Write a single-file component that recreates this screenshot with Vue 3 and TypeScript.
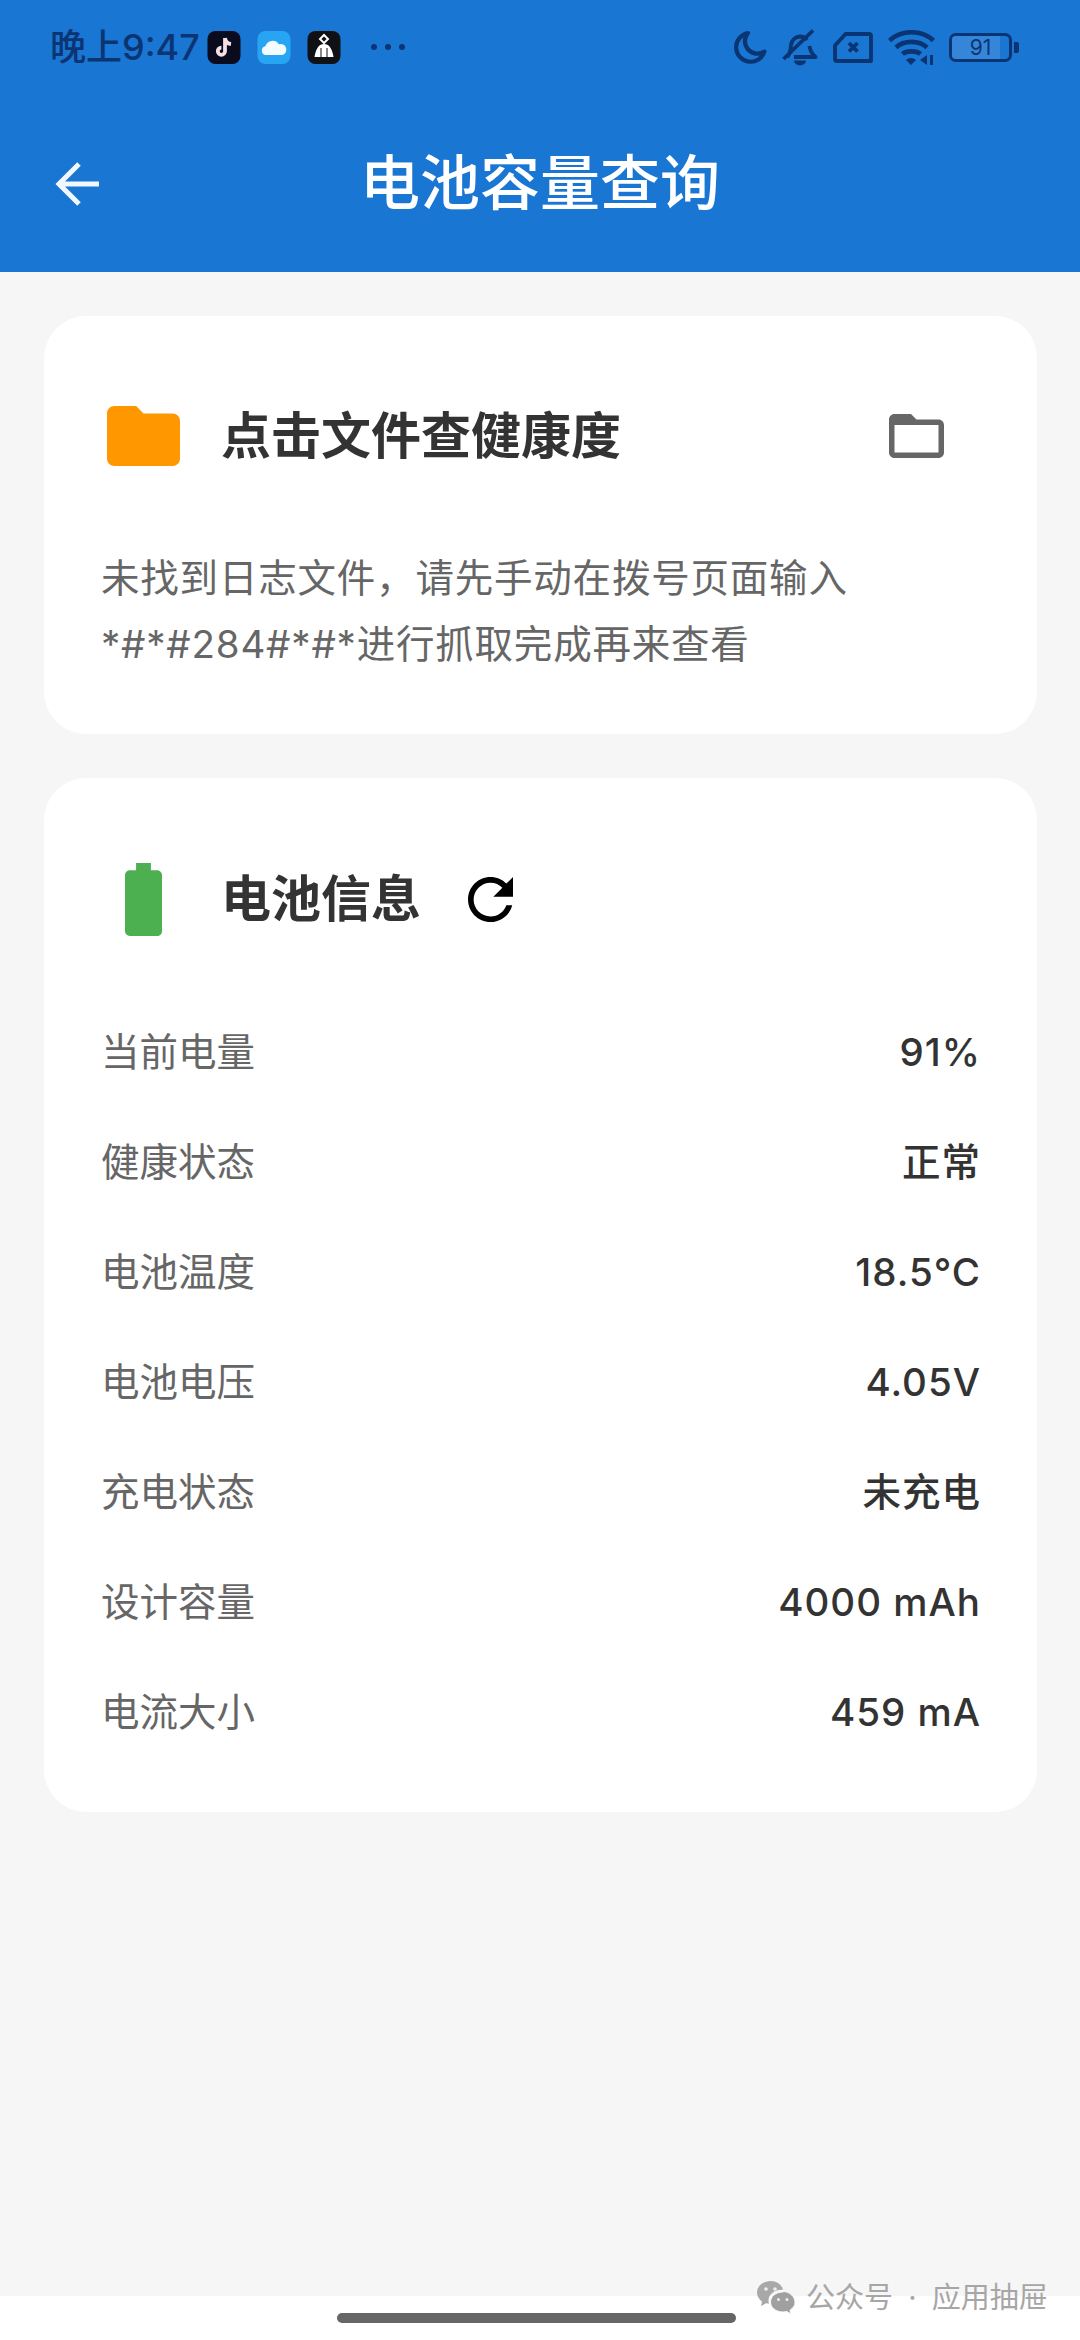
<script setup lang="ts">
const rows: { label: string; value: string }[] = [
  { label: '当前电量', value: '91%' },
  { label: '健康状态', value: '正常' },
  { label: '电池温度', value: '18.5°C' },
  { label: '电池电压', value: '4.05V' },
  { label: '充电状态', value: '未充电' },
  { label: '设计容量', value: '4000 mAh' },
  { label: '电流大小', value: '459 mA' },
]
</script>

<template>
  <div class="page">
    <header class="appbar">
      <div class="status">
        <span class="time">晚上9:47</span>
        <svg class="app" viewBox="0 0 33 33">
          <rect width="33" height="33" rx="8" fill="#0b0b1e" />
          <path d="M17.500 7v13.200a3.600 3.600 0 1 1-3.600-3.600M17.500 7c.4 3.600 2.600 5.600 6 6" fill="none" stroke="#f4dfe4" stroke-width="3.800" />
        </svg>
        <svg class="app" viewBox="0 0 33 33">
          <rect width="33" height="33" rx="8" fill="#27a5f3" />
          <path d="M8.500 24a4.400 4.400 0 0 1-.6-8.700 7.500 7.500 0 0 1 13.500-2 5.400 5.400 0 0 1 3.600 10.700z" fill="#f2fbff" />
        </svg>
        <svg class="app" viewBox="0 0 33 33">
          <rect width="33" height="33" rx="8" fill="#101114" />
          <path d="M16.500 4l4 4-4 4-4-4z" fill="none" stroke="#fff" stroke-width="2" />
          <path d="M16.500 13c5 0 8 4 9.500 13H7c1.500-9 4.500-13 9.500-13z" fill="#fff" />
          <path d="M13.500 17v9M19.500 17v9" stroke="#101114" stroke-width="1" />
        </svg>
        <span class="dots"><i></i><i></i><i></i></span>
        <span class="status-right">
          <svg width="34" height="34" viewBox="0 0 34 34" fill="none" stroke="#0b3472" stroke-width="4.200">
            <path d="M15 3A14.500 14.500 0 1 0 31.500 21.500a12.500 12.500 0 0 1-16.500-18.500z" stroke-linejoin="round" />
          </svg>
          <svg width="36" height="37" viewBox="0 0 36 37" fill="none" stroke="#0b3472" stroke-width="3.800">
            <path d="M5 28c3.500-3 3.500-7 4-12 .6-5 4.500-8.500 9-8.500 3 0 5.500 1.300 7 3.500M27.500 17c.5 4 2.500 8 6 11H12" stroke-linejoin="round" />
            <path d="M1.500 30L31 1.500" />
            <path d="M12 31.500h12a6 5 0 0 1-12 0z" fill="#0b3472" stroke="none" />
          </svg>
          <svg width="40" height="31" viewBox="0 0 40 31" fill="none" stroke="#0b3472" stroke-width="3.800">
            <path d="M2 13.500L12.500 2H36a2 2 0 0 1 2 2v25H4a2 2 0 0 1-2-2z" stroke-linejoin="round" />
            <path d="M16 11l8.500 8.500M24.500 11L16 19.500" />
          </svg>
          <svg width="47" height="35" viewBox="0 0 47 35" fill="none" stroke="#0b3472" stroke-width="4.600">
            <path d="M1.500 10.500c12-11 32-11 44 0M8 17.500c8-7.500 23-7.500 31 0M14.500 24c4-3.500 14-3.500 18 0" />
            <path d="M23 35l-5-5a7 7 0 0 1 10 0z" fill="#0b3472" stroke="none" />
            <path d="M32 30l7-5v10zM42 25h3v10h-3z" fill="#0b3472" stroke="none" />
          </svg>
          <span class="battery">
            <span class="cell"><span class="level"></span><span class="num">91</span></span>
            <span class="nub"></span>
          </span>
        </span>
      </div>
      <div class="toolbar">
        <svg class="back" viewBox="0 0 44 44" fill="none" stroke="#f2f8fd" stroke-width="5">
          <path d="M44 22H3M24 2L4 22l20 20" />
        </svg>
        <h1 class="title">电池容量查询</h1>
      </div>
    </header>

    <main class="content">
      <section class="card first-card">
        <div class="head">
          <span class="slot">
            <svg width="73" height="60" viewBox="2 4 20 16" preserveAspectRatio="none">
              <path d="M10 4H4c-1.100 0-2 .9-2 2v12c0 1.100.9 2 2 2h16c1.100 0 2-.9 2-2V8c0-1.100-.9-2-2-2h-8l-2-2z" fill="#ff9800" />
            </svg>
          </span>
          <h2 class="card-title">点击文件查健康度</h2>
          <svg class="open" width="55" height="44" viewBox="2 4 20 16" preserveAspectRatio="none">
            <path d="M20 6h-8l-2-2H4c-1.100 0-2 .9-2 2v12c0 1.100.9 2 2 2h16c1.100 0 2-.9 2-2V8c0-1.100-.9-2-2-2zm0 12H4V8h16v10z" fill="#666" />
          </svg>
        </div>
        <p class="hint">未找到日志文件，请先手动在拨号页面输入<br />*#*#284#*#*进行抓取完成再来查看</p>
      </section>

      <section class="card second-card">
        <div class="head">
          <span class="slot">
            <svg width="37" height="73" viewBox="7 2 10 20" preserveAspectRatio="none">
              <path d="M15.670 4H14V2h-4v2H8.330C7.600 4 7 4.600 7 5.330v15.330C7 21.400 7.600 22 8.330 22h7.330c.74 0 1.340-.6 1.340-1.330V5.330C17 4.600 16.400 4 15.670 4z" fill="#4caf50" />
            </svg>
          </span>
          <h2 class="card-title">电池信息</h2>
          <svg class="refresh" width="45" height="45" viewBox="4 4 16 16">
            <path d="M17.650 6.350C16.200 4.900 14.210 4 12 4c-4.420 0-7.990 3.580-7.990 8s3.570 8 7.990 8c3.730 0 6.840-2.550 7.730-6h-2.080c-.82 2.330-3.040 4-5.650 4-3.310 0-6-2.690-6-6s2.690-6 6-6c1.660 0 3.140.69 4.220 1.780L13 11h7V4l-2.350 2.350z" fill="#000" />
          </svg>
        </div>
        <div class="rows">
          <div v-for="row in rows" :key="row.label" class="row">
            <span class="label">{{ row.label }}</span>
            <span class="value">{{ row.value }}</span>
          </div>
        </div>
      </section>
    </main>

    <footer class="gesture"><span class="pill"></span></footer>

    <div class="watermark">
      <svg width="40" height="33" viewBox="0 0 40 33">
        <path d="M14 0C6.300 0 0 5 0 11.500c0 3.700 2 6.800 5 8.900L4 25l5-2.700c1 .3 2 .4 3 .5-.3-1-.5-2-.5-3 0-6.300 5.800-11 13-11 .5 0 1 0 1.500.1C25 4 20 0 14 0z" fill="#a8a8a8" />
        <path d="M26 11c-7.200 0-12.500 4.500-12.500 10S18.800 31 26 31c1.300 0 2.500-.2 3.700-.5l4.300 2.500-1-3.800c3-1.900 5-4.700 5-7.700 0-5.500-5-11-12-11z" fill="#a0a0a0" stroke="#f9f9f9" stroke-width="1" />
        <circle cx="9" cy="8" r="1.800" fill="#eee" /><circle cx="18" cy="8" r="1.800" fill="#eee" />
        <circle cx="21.500" cy="18.500" r="1.500" fill="#eee" /><circle cx="30" cy="18.500" r="1.500" fill="#eee" />
      </svg>
      <span class="wm-text">公众号 · 应用抽屉</span>
    </div>
  </div>
</template>

<style>
html, body { margin: 0; padding: 0; background: #fff; }
</style>

<style scoped>
.page {
  position: relative;
  width: 1080px;
  height: 2340px;
  display: flex;
  flex-direction: column;
  overflow: hidden;
  background: #f6f6f6;
  font-family: Inter, "Noto Sans CJK SC", sans-serif;
}
.appbar { background: #1976d2; flex: none; }
.status {
  height: 94px;
  padding: 0 61px 0 50px;
  display: flex;
  align-items: center;
  box-sizing: border-box;
}
.time { width: 157px; font-size: 36px; line-height: 1; color: #0b3472; font-weight: 500; white-space: nowrap; }
.app { width: 34px; height: 33px; margin-right: 16px; flex: none; }
.dots { display: flex; gap: 8px; margin-left: 14px; }
.dots i { width: 6px; height: 6px; border-radius: 50%; background: #0b3472; }
.status-right { margin-left: auto; display: flex; align-items: center; gap: 15px; }
.battery { display: flex; align-items: center; gap: 2px; margin-left: -1px; }
.cell {
  position: relative;
  width: 63px;
  height: 29px;
  box-sizing: border-box;
  border: 3px solid #0b3472;
  border-radius: 7px;
  overflow: hidden;
  display: flex;
  align-items: center;
  justify-content: center;
}
.level { position: absolute; left: 0; top: 0; bottom: 0; width: 84%; background: #3586d9; }
.num { position: relative; font-size: 21px; line-height: 1; color: #0b3472; }
.nub { width: 5px; height: 11px; border-radius: 0 2px 2px 0; background: #0b3472; }
.toolbar {
  position: relative;
  height: 178px;
  display: flex;
  align-items: center;
  justify-content: center;
}
.back { position: absolute; left: 55px; top: 68px; width: 44px; height: 44px; }
.title { margin: 0; font-size: 60px; font-weight: 500; color: #fff; line-height: 1; }
.content { flex: 1; padding: 44px 43px 0 44px; display: flex; flex-direction: column; gap: 44px; }
.card { background: #fff; border-radius: 42px; padding: 0 56px 0 57px; }
.first-card { padding-top: 76px; padding-bottom: 57px; }
.second-card { padding-top: 77px; padding-bottom: 45px; }
.head { display: flex; align-items: center; height: 88px; }
.slot { width: 84px; margin-right: 36px; display: flex; justify-content: center; flex: none; }
.card-title { margin: 0; font-size: 50px; line-height: 1; font-weight: 700; color: #333; }
.open { margin-left: auto; margin-right: 37px; }
.refresh { margin-left: 47px; }
.hint { margin: 65px 0 0; font-size: 38.500px; line-height: 66px; color: #666; letter-spacing: 0.8px; }
.rows { margin-top: 54px; }
.row { height: 110px; display: flex; align-items: center; justify-content: space-between; font-size: 38.500px; line-height: 1; }
.label { color: #666; }
.value { color: #333; font-weight: 500; letter-spacing: 1px; }
.gesture {
  flex: none;
  height: 44px;
  background: #fff;
  display: flex;
  justify-content: center;
  padding-top: 17px;
  box-sizing: border-box;
}
.pill { width: 399px; height: 10px; border-radius: 5px; background: #666; margin-left: -7px; }
.watermark {
  position: absolute;
  left: 757px;
  top: 2281px;
  display: flex;
  align-items: center;
  gap: 9px;
  color: #a6a6a6;
  white-space: nowrap;
  line-height: 33px;
}
.wm-text { font-size: 29px; word-spacing: 7px; }
</style>
